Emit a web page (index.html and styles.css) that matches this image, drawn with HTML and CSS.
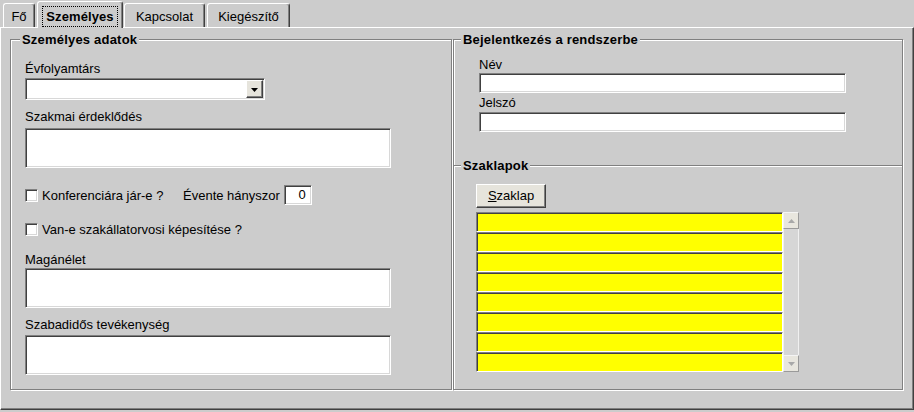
FILE: index.html
```html
<!DOCTYPE html>
<html lang="hu">
<head>
<meta charset="utf-8">
<title>Személyes</title>
<link rel="stylesheet" href="styles.css">
</head>
<body>
<div class="window">
  <div class="tabs">
    <div class="tab t-fo">Fő</div>
    <div class="tab t-sz active"><span class="focus">Személyes</span></div>
    <div class="tab t-ka">Kapcsolat</div>
    <div class="tab t-ki">Kiegészítő</div>
  </div>
  <div class="panel">
    <fieldset class="group g-left">
      <legend>Személyes adatok</legend>
      <div class="gbody gbody-left">
        <div class="lbl l-evf">Évfolyamtárs</div>
        <div class="combo sunk">
          <div class="combo-btn raised">
            <svg width="7" height="4" viewBox="0 0 7 4"><polygon points="0,0 7,0 3.5,4" fill="#000"/></svg>
          </div>
        </div>
        <div class="lbl l-szak">Szakmai érdeklődés</div>
        <div class="memo sunk"></div>
        <div class="chkrow r1">
          <div class="chkwrap">
            <span class="chk sunk"></span>
            <span class="chklbl">Konferenciára jár-e ?</span>
          </div>
          <span class="evente">Évente hányszor</span>
          <div class="num sunk">0</div>
        </div>
        <div class="chkrow r2">
          <span class="chk sunk"></span>
          <span class="chklbl">Van-e szakállatorvosi képesítése ?</span>
        </div>
        <div class="lbl l-mag">Magánélet</div>
        <div class="memo sunk m2"></div>
        <div class="lbl l-szab">Szabadidős tevékenység</div>
        <div class="memo sunk m3"></div>
      </div>
    </fieldset>
    <fieldset class="group g-right">
      <legend>Bejelentkezés a rendszerbe</legend>
      <div class="gbody">
        <div class="lbl r-lbl l-nev">Név</div>
        <div class="edit sunk e-nev"></div>
        <div class="lbl r-lbl l-jel">Jelszó</div>
        <div class="edit sunk e-jel"></div>
        <div class="sep">
          <span class="sep-line short"></span>
          <span class="sep-text">Szaklapok</span>
          <span class="sep-line long"></span>
        </div>
        <div class="btn raised"><span class="u">S</span>zaklap</div>
        <div class="list">
          <div class="rows">
            <div class="row"></div>
            <div class="row"></div>
            <div class="row"></div>
            <div class="row"></div>
            <div class="row"></div>
            <div class="row"></div>
            <div class="row"></div>
            <div class="row"></div>
          </div>
          <div class="sb">
            <div class="sb-btn raised">
              <svg width="7" height="4" viewBox="0 0 7 4"><polygon points="0,4 7,4 3.5,0" fill="#a8a8a8"/></svg>
            </div>
            <div class="sb-track"></div>
            <div class="sb-btn raised">
              <svg width="7" height="4" viewBox="0 0 7 4"><polygon points="0,0 7,0 3.5,4" fill="#a8a8a8"/></svg>
            </div>
          </div>
        </div>
      </div>
    </fieldset>
  </div>
</div>
</body>
</html>
```
FILE: styles.css
```css
html, body {
  margin: 0;
  padding: 0;
}
body {
  width: 914px;
  height: 412px;
  overflow: hidden;
  background: #cccccc;
  font-family: "Liberation Sans", Arial, sans-serif;
  font-size: 13px;
  line-height: 15px;
  color: #000;
}
.window {
  width: 914px;
}

/* tabs */
.tabs {
  display: flex;
  align-items: flex-end;
  height: 27px;
}
.tab {
  box-sizing: border-box;
  height: 24px;
  border: 1px solid #fff;
  border-bottom: none;
  border-right-color: #404040;
  box-shadow: inset -1px 0 0 #808080;
  border-radius: 3px 3px 0 0;
  padding-top: 5px;
  text-align: center;
  background: #cccccc;
}
.t-fo { margin-left: 3px; width: 32px; }
.t-sz { margin-left: 2px; width: 86px; }
.t-ka { margin-left: 1px; width: 81px; }
.t-ki { margin-left: 2px; width: 83px; }
.tab.active {
  height: 27px;
  margin-bottom: -1px;
  padding-top: 7px;
  position: relative;
  z-index: 1;
  font-weight: bold;
  letter-spacing: 0.1px;
}
.focus {
  outline: 1px dotted #000;
  outline-offset: 1px;
  padding: 1px 2px;
}

/* panel */
.panel {
  box-sizing: border-box;
  width: 914px;
  height: 383px;
  border-top: 1px solid #fff;
  border-left: 1px solid #fff;
  border-right: 1px solid #404040;
  border-bottom: 1px solid #404040;
  box-shadow: inset -1px -1px 0 #808080;
  padding: 4px 0 0 9px;
  display: flex;
  align-items: flex-start;
}

/* group boxes */
.group {
  box-sizing: border-box;
  margin: 0;
  padding: 0;
  min-width: 0;
  height: 358px;
  border: 1px solid #808080;
  box-shadow: inset 1px 1px 0 #fff, 1px 1px 0 #fff;
}
.g-left { width: 442px; }
.g-right { width: 450px; margin-left: 1px; }
.group legend {
  padding: 0 2px;
  margin-left: 9px;
  background: #cccccc;
  font-weight: bold;
  letter-spacing: 0.2px;
  line-height: 15px;
}
.g-right legend { margin-left: 7px; }

.gbody-left { padding-left: 14px; }

.lbl { height: 15px; white-space: nowrap; }
.l-evf { margin-top: 14px; }
.l-szak { margin-top: 9px; }
.l-mag { margin-top: 15px; }
.l-szab { margin-top: 9px; }

.sunk {
  box-sizing: border-box;
  background: #fff;
  border: 1px solid;
  border-color: #808080 #fff #fff #808080;
  box-shadow: inset 1px 1px 0 #404040, inset -1px -1px 0 #d8d8d8;
}
.raised {
  box-sizing: border-box;
  background: #e6e4dc;
  border: 1px solid;
  border-color: #fff #404040 #404040 #fff;
  box-shadow: inset -1px -1px 0 #808080;
}

.combo {
  margin-top: 2px;
  width: 240px;
  height: 22px;
  padding: 1px;
  display: flex;
  justify-content: flex-end;
}
.combo-btn {
  width: 17px;
  height: 18px;
  display: flex;
  align-items: center;
  justify-content: center;
}
.combo-btn svg { display: block; margin-top: 1px; }

.memo {
  margin-top: 4px;
  width: 366px;
  height: 40px;
}
.memo.m2 { margin-top: 1px; }
.memo.m3 { margin-top: 3px; }

.chkrow {
  display: flex;
  align-items: center;
  white-space: nowrap;
}
.chkrow.r1 { margin-top: 17px; height: 20px; }
.chkrow.r2 { margin-top: 17px; height: 15px; }
.chkwrap {
  display: flex;
  align-items: center;
  width: 158px;
}
.chk {
  display: block;
  width: 13px;
  height: 13px;
  flex: none;
}
.chklbl { margin-left: 4px; }
.evente { }
.num {
  margin-left: 4px;
  width: 28px;
  height: 20px;
  text-align: right;
  padding-right: 5px;
  line-height: 17px;
}

/* right group */
.r-lbl { margin-left: 25px; }
.l-nev { margin-top: 10px; }
.l-jel { margin-top: 2px; }
.edit {
  margin-left: 25px;
  width: 367px;
  height: 20px;
}
.e-nev { margin-top: 1px; }
.e-jel { margin-top: 2px; }

.sep {
  margin-top: 26px;
  height: 15px;
  display: flex;
}
.sep-line {
  display: block;
  margin-top: 7px;
  height: 2px;
  box-sizing: border-box;
  border-top: 1px solid #808080;
  border-bottom: 1px solid #fff;
}
.sep-line.short { width: 7px; }
.sep-line.long { flex: 1; }
.sep-text {
  padding: 0 2px;
  font-weight: bold;
  letter-spacing: 0.2px;
}

.btn {
  margin-top: 11px;
  margin-left: 22px;
  width: 70px;
  height: 24px;
  text-align: center;
  line-height: 21px;
}
.u { text-decoration: underline; }

.list {
  margin-top: 4px;
  margin-left: 22px;
  display: flex;
}
.rows { width: 307px; }
.row {
  box-sizing: border-box;
  height: 20px;
  background: #ffff00;
  border-top: 1px solid #808080;
  border-left: 1px solid #808080;
  border-bottom: 1px solid #fff;
  border-right: 1px solid #fff;
  box-shadow: inset 1px 1px 0 #404040;
}
.sb {
  width: 16px;
  height: 160px;
  display: flex;
  flex-direction: column;
  background: #d6d6d6;
}
.sb-btn {
  width: 16px;
  height: 17px;
  display: flex;
  align-items: center;
  justify-content: center;
  background: #e8e6de;
  border-color: #f4f4f4 #9a9a9a #9a9a9a #f4f4f4;
  box-shadow: none;
}
.sb-btn svg { display: block; }
.sb-track {
  flex: 1;
  box-sizing: border-box;
  border-left: 1px solid #f0f0f0;
  border-right: 1px solid #f0f0f0;
}
```
